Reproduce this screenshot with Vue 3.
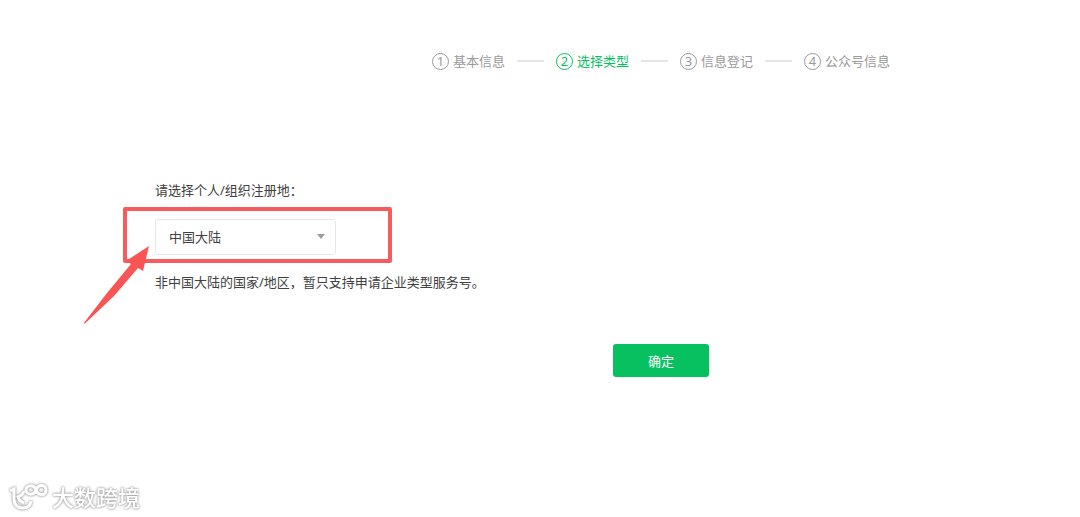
<script setup>
import { ref } from "vue";

const steps = ["基本信息", "选择类型", "信息登记", "公众号信息"];
const current = ref(1);
const region = ref("cn");
</script>

<template>
    <main class="page">
        <ol class="steps">
            <li v-for="(step, i) in steps" :key="step" class="step" :class="{ active: i === current }">
                <span class="num">{{ i + 1 }}</span>
                <span>{{ step }}</span>
            </li>
        </ol>

        <form class="form" @submit.prevent>
            <label class="label" for="region">请选择个人/组织注册地：</label>
            <div class="field">
                <div class="selectBox">
                    <select id="region" v-model="region">
                        <option value="cn">中国大陆</option>
                    </select>
                </div>
                <div class="mark"></div>
                <svg class="pointer" width="68" height="80" viewBox="0 0 68 80">
                    <path d="M66 2L43 17L48 20L24 49L0.500 79.500L2 79.500L31 52L55 24L60 27Z" />
                </svg>
            </div>
            <p class="tip">非中国大陆的国家/地区，暂只支持申请企业类型服务号。</p>
            <div class="actions">
                <button type="submit" class="submitBTN">确定</button>
            </div>
        </form>

        <div class="watermark">
            <svg width="42" height="30" viewBox="0 0 42 30">
                <g class="logo">
                    <path d="M2 9L6 7V18Q7 26 15 26Q22 26 23 19" />
                    <path d="M16 9Q15 13 10 15Q11 19 16 21" />
                    <path d="M28 8C26 2 18 3 18 8C18 13 26 14 28 8C30 2 38 2 38 8C38 14 30 14 28 8Z" />
                </g>
            </svg>
            <span>大数跨境</span>
        </div>
    </main>
</template>

<style>
body {
    margin: 0;
    background: #fff;
}
</style>

<style scoped>
.page {
    position: relative;
    box-sizing: border-box;
    min-height: 100vh;
    padding: 51px 0 0 155px;
    font-family: "Noto Sans", "Noto Sans CJK SC", sans-serif;
    font-size: 13px;
    line-height: 20px;
    color: #404040;
}
.steps {
    display: flex;
    justify-content: center;
    margin: 0;
    padding: 0 0 0 87px;
    list-style: none;
    color: #9a9a9a;
}
.step {
    display: flex;
    align-items: center;
    gap: 4px;
    white-space: nowrap;
}
.step + .step::before {
    content: "";
    width: 27px;
    height: 2px;
    margin: 0 8px 0 12px;
    background: #e4e6e5;
}
.step.active {
    color: #07c160;
}
.num {
    box-sizing: border-box;
    width: 17px;
    height: 17px;
    border: 1px solid currentColor;
    border-radius: 50%;
    line-height: 15px;
    text-align: center;
}
.form {
    margin-top: 109px;
}
.label {
    display: block;
}
.field {
    position: relative;
    margin: 19px 0 17px;
}
.selectBox {
    position: relative;
    width: 181px;
}
.selectBox::after {
    content: "";
    position: absolute;
    top: 15px;
    right: 11px;
    border: 4px solid transparent;
    border-top: 5px solid #9a9a9a;
    border-bottom: 0;
    pointer-events: none;
}
select {
    display: block;
    width: 100%;
    height: 36px;
    padding: 0 13px;
    appearance: none;
    border: 1px solid #e7e7eb;
    border-radius: 3px;
    background: #fff;
    color: inherit;
    font: inherit;
}
/* red frame and arrow drawn over the field */
.mark {
    position: absolute;
    box-sizing: border-box;
    top: -12px;
    left: -32px;
    width: 269px;
    height: 56px;
    border: 4px solid #f75c5c;
    border-radius: 2px;
    pointer-events: none;
}
.pointer {
    position: absolute;
    top: 25px;
    left: -72px;
    fill: #fa5555;
    pointer-events: none;
}
.tip {
    margin: 0;
}
.actions {
    display: flex;
    justify-content: center;
    margin-top: 52px;
    padding-left: 87px;
}
.submitBTN {
    width: 96px;
    height: 33px;
    padding: 0;
    border: none;
    border-radius: 3px;
    background: #07c160;
    color: #fff;
    font: inherit;
    cursor: pointer;
}
.watermark {
    position: absolute;
    left: 8px;
    bottom: 5px;
    display: flex;
    align-items: center;
    gap: 2px;
    color: #fff;
    font-size: 22px;
    font-weight: 500;
    line-height: 30px;
    filter: drop-shadow(0 0 1px #999) drop-shadow(0 0 1px #ccc);
}
.logo {
    fill: none;
    stroke: #fff;
    stroke-width: 3;
}
</style>
